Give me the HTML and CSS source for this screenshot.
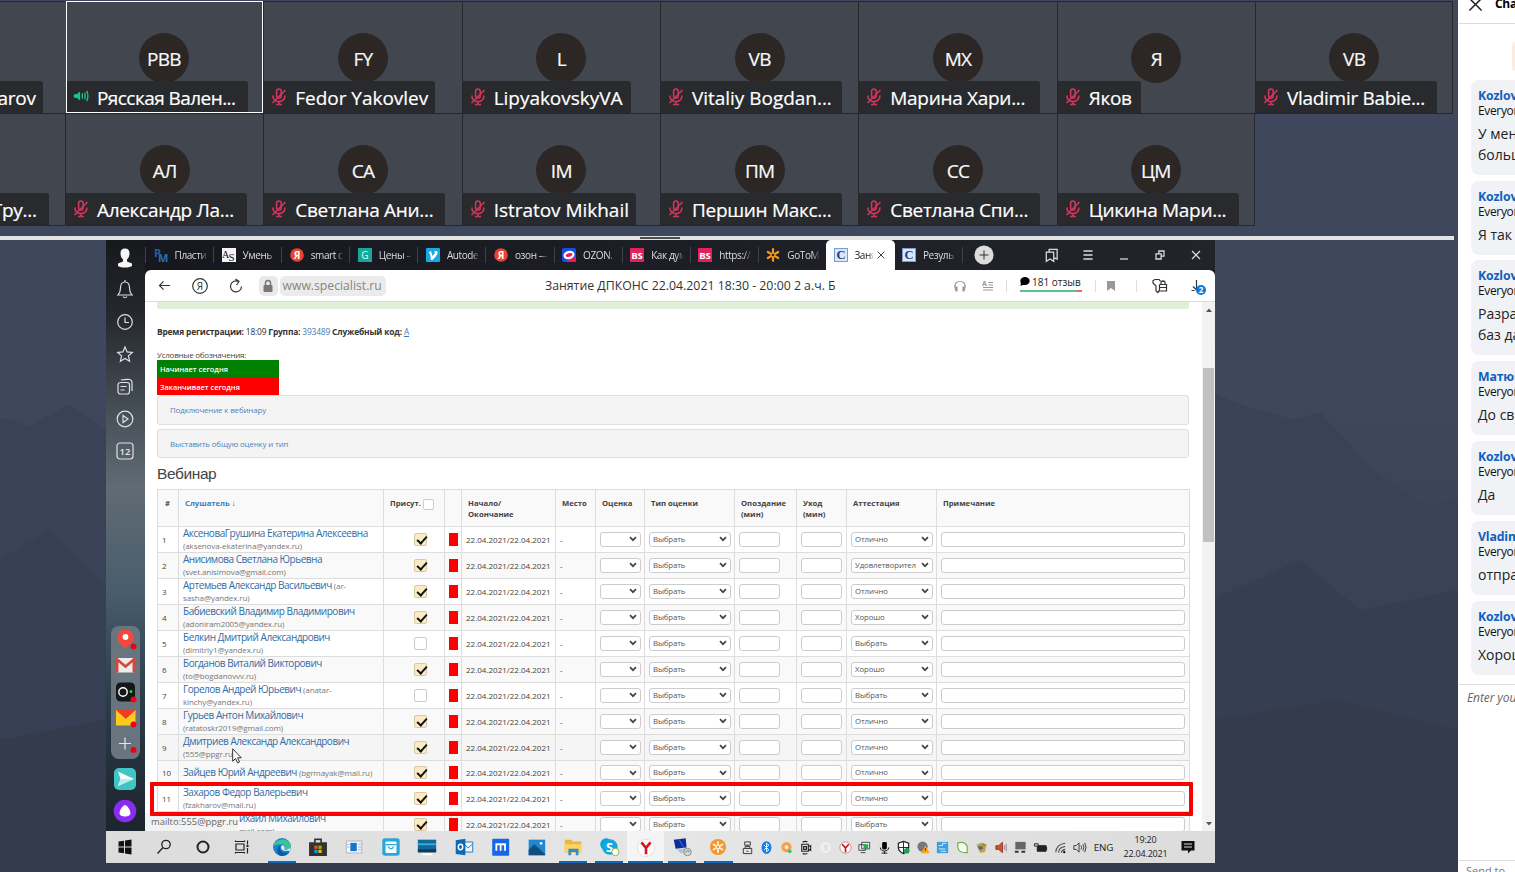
FILE: index.html
```html
<!DOCTYPE html>
<html lang="ru">
<head>
<meta charset="utf-8">
<title>Webinar</title>
<link rel="stylesheet" href="styles.css">
</head>
<body>
<svg class="defs" width="0" height="0">
  <symbol id="mic" viewBox="0 0 16 18"><g fill="none" stroke="#d2345c" stroke-width="1.6"><rect x="5.6" y="1" width="4.6" height="9" rx="2.3"/><path d="M2 7.500v1.200a5.800 4.800 0 0 0 11.800 0V7.500M8 13.500v3.500M5 16.500h6M1.500 15L14.500 2"/></g></symbol>
  <symbol id="chev" viewBox="0 0 8 6"><path d="M1 1.200l3 3 3-3" fill="none" stroke="#444" stroke-width="1.700"/></symbol>
  <symbol id="bs" viewBox="0 0 14 14"><rect width="14" height="14" fill="#e0215c"/><text x="7" y="10.500" text-anchor="middle" font-size="9.500" font-weight="700" fill="#fff">BS</text></symbol>
  <symbol id="ya" viewBox="0 0 14 14"><circle cx="7" cy="7" r="6.800" fill="#ee4130"/><text x="7" y="10.600" text-anchor="middle" font-size="10" font-weight="700" fill="#fff">Я</text></symbol>
  <symbol id="cc" viewBox="0 0 14 14"><rect x=".5" y=".5" width="13" height="13" fill="#dce6f6" stroke="#7d9cd0"/><text x="7" y="11" text-anchor="middle" font-size="12.500" font-weight="700" class="serif" fill="#1c3a80">C</text></symbol>
</svg>
<div class="app">
  <main class="stage">
    <svg class="wall" viewBox="0 0 1458 872" preserveAspectRatio="none"><path d="M0 418l30 8 40-22 40 30V872H0z" fill="#3a4258"/><path d="M0 560l50-30 60 60V872H0z" fill="#363f53"/><path d="M1210 392l40 16 45 12 25-8 55 60 50 34 33-8V872H1210z" fill="#3a4257"/><path d="M1210 600l90-40 60 50 98-20V872H1210z" fill="#363f52"/><path d="M0 740l106-20h1109l120-20 123 30V872H0z" fill="#333b4c"/></svg>
    <section class="gallery">
      <div class="tile"><div class="tag end t1"><b>Fedor Zakharov</b></div></div>
      <div class="tile talk"><i class="ava">РВВ</i><div class="tag wide"><svg viewBox="0 0 18 14"><path d="M1 5h3l4-3v10L4 9H1z" fill="#19c584"/><path d="M10.500 4v6M13.500 3v8M15.500 1q2.500 6 0 12" fill="none" stroke="#19c584" stroke-width="1.500"/></svg><b class="narrow">Рясская Вален...</b></div></div>
      <div class="tile"><i class="ava">FY</i><div class="tag w-fy"><svg><use href="#mic"/></svg><b class="lat">Fedor Yakovlev</b></div></div>
      <div class="tile"><i class="ava">L</i><div class="tag w-l"><svg><use href="#mic"/></svg><b class="lat">LipyakovskyVA</b></div></div>
      <div class="tile"><i class="ava">VB</i><div class="tag wide"><svg><use href="#mic"/></svg><b class="lat">Vitaliy Bogdan...</b></div></div>
      <div class="tile"><i class="ava">МХ</i><div class="tag wide"><svg><use href="#mic"/></svg><b>Марина Хари...</b></div></div>
      <div class="tile"><i class="ava">Я</i><div class="tag w-ya"><svg><use href="#mic"/></svg><b>Яков</b></div></div>
      <div class="tile last"><i class="ava">VB</i><div class="tag wide"><svg><use href="#mic"/></svg><b>Vladimir Babie...</b></div></div>
      <div class="tile"><div class="tag end t2"><b>Ирина Гру...</b></div></div>
      <div class="tile"><i class="ava">АЛ</i><div class="tag wide"><svg><use href="#mic"/></svg><b>Александр Ла...</b></div></div>
      <div class="tile"><i class="ava">СА</i><div class="tag wide"><svg><use href="#mic"/></svg><b>Светлана Ани...</b></div></div>
      <div class="tile"><i class="ava">IM</i><div class="tag w-im"><svg><use href="#mic"/></svg><b class="lat">Istratov Mikhail</b></div></div>
      <div class="tile"><i class="ava">ПМ</i><div class="tag wide"><svg><use href="#mic"/></svg><b>Першин Макс...</b></div></div>
      <div class="tile"><i class="ava">СС</i><div class="tag wide"><svg><use href="#mic"/></svg><b>Светлана Спи...</b></div></div>
      <div class="tile last"><i class="ava">ЦМ</i><div class="tag wide"><svg><use href="#mic"/></svg><b>Цикина Мари...</b></div></div>
    </section>
    <div class="divider"><span></span></div>

    <section class="desktop">
      <div class="browser">
        <aside class="side">
          <svg viewBox="0 0 24 24"><path d="M12 3.500c3.200 0 4.600 2 4.500 5s-1.300 5-2.500 6v2l5 2v2.500c-4 2-10 2-14 0V18.500l5-2v-2C8.800 13.500 7.600 11.500 7.500 8.500s1.300-5 4.500-5z" fill="#f5f5f5"/></svg>
          <svg viewBox="0 0 24 24"><path d="M5 18c2-2 2.500-4 2.500-7 0-4 2-6 4.500-6s4.500 2 4.500 6c0 3 .5 5 2.500 7zM10 19.500q2 2.500 4 0M12 3v2"/></svg>
          <svg viewBox="0 0 24 24"><circle cx="12" cy="12" r="7.300"/><path d="M12 7.500v5h4"/></svg>
          <svg viewBox="0 0 24 24"><path d="M12 5l2.100 4.900 5.200.5-3.900 3.500 1.200 5.300-4.600-2.700-4.600 2.700 1.200-5.300-3.900-3.500 5.200-.5z"/></svg>
          <svg viewBox="0 0 24 24"><rect x="5" y="7.500" width="11.500" height="11.500" rx="2.500"/><path d="M8 5q5.500-1 8.500-.5 2.500.5 2.500 3V16M7.500 11.500h6M7.500 15h4"/></svg>
          <svg viewBox="0 0 24 24"><circle cx="12" cy="12" r="7.800"/><path d="M10 8.500v7l5-3.500z"/></svg>
          <svg viewBox="0 0 24 24"><rect x="4" y="4" width="16" height="16" rx="3"/><text x="12" y="15.500" text-anchor="middle" font-size="9.500" font-weight="600" fill="#e5e9ec" stroke="none">12</text></svg>
          <div class="pins">
            <svg viewBox="0 0 26 24"><path d="M12.500 2.500a8 8 0 0 1 8 8c0 4.500-4 8-8 11-4-3-8-6.500-8-11a8 8 0 0 1 8-8z" fill="#f4483c"/><circle cx="12.500" cy="10" r="2.900" fill="#fff"/><circle cx="20.500" cy="19.500" r="3" fill="#f00010"/></svg>
            <svg viewBox="0 0 26 24"><rect x="3" y="5" width="19" height="14.500" rx="1" fill="#ececec"/><path d="M4.200 19.500V6.500l8.300 7 8.300-7v13" fill="none" stroke="#d44738" stroke-width="2.500"/></svg>
            <svg viewBox="0 0 26 24"><rect x="3" y="2.500" width="19" height="19" rx="4.500" fill="#14181b"/><circle cx="10" cy="12" r="4.200" fill="none" stroke="#fff" stroke-width="1.400"/><circle cx="18" cy="11.500" r="1.500" fill="#28cf46"/><circle cx="20.500" cy="19.500" r="3" fill="#f00010"/></svg>
            <svg viewBox="0 0 26 24"><rect x="3" y="4" width="19.500" height="15.500" fill="#fecb1c"/><path d="M3 4h19.500l-9.700 9z" fill="#f23a2a"/><circle cx="20.500" cy="18.500" r="3" fill="#f00010"/></svg>
            <svg viewBox="0 0 26 24"><path d="M12 5.500v12M6 11.500h12" stroke="#e4e8ea" stroke-width="1.200"/><circle cx="20.500" cy="18" r="3" fill="#f00010"/></svg>
          </div>
          <svg class="big" viewBox="0 0 26 26"><rect x="2" y="2" width="22" height="22" rx="5" fill="#41c5c2"/><path d="M6 5.500L22 13 6 20l2.500-7z" fill="#f5ffff"/><path d="M8.500 13H22L6 20z" fill="#b7eeee"/></svg>
          <svg class="big" viewBox="0 0 26 26"><circle cx="13" cy="13" r="11.300" fill="#8a2cf0"/><path d="M13 7c2 0 5.500 5.500 5.500 8S15.500 18.500 13 18.500 7.500 17.500 7.500 15 11 7 13 7z" fill="#fff"/></svg>
        </aside>
        <div class="main">
          <header class="tabs">
            <div class="tab"><svg viewBox="0 0 14 14"><text x="0" y="9" font-size="11" font-weight="700" fill="#1f5fa5">P</text><text x="4" y="14" font-size="11" font-weight="700" fill="#2a6db4">M</text></svg><span>Пласти</span></div>
            <div class="tab"><svg viewBox="0 0 14 14"><rect width="14" height="14" fill="#f4f4f4"/><text x="0" y="10" font-size="10" class="serif" fill="#111">A</text><text x="6.500" y="12.500" font-size="11" class="serif" fill="#111">S</text></svg><span>Умень</span></div>
            <div class="tab"><svg><use href="#ya"/></svg><span>smart с</span></div>
            <div class="tab"><svg viewBox="0 0 14 14"><rect width="14" height="14" fill="#18a89b"/><text x="7" y="10.500" text-anchor="middle" font-size="10" fill="#d8fff8">G</text></svg><span>Цены –</span></div>
            <div class="tab"><svg viewBox="0 0 14 14"><rect width="14" height="14" rx="1" fill="#1aa7e4"/><path d="M2.500 4.500L5 3l1.500 5L9 5 8 3.500q4-1.500 3.500 1.500T6.500 12H5L4 6z" fill="#fff"/></svg><span>Autode</span></div>
            <div class="tab"><svg><use href="#ya"/></svg><span>озон —</span></div>
            <div class="tab"><svg viewBox="0 0 14 14"><rect width="14" height="14" rx="2" fill="#1450e0"/><path d="M14 8v6H3z" fill="#f0185c"/><ellipse cx="7" cy="7" rx="4.500" ry="3" fill="#f0185c" stroke="#fff" stroke-width="2.200" transform="rotate(-15 7 7)"/></svg><span>OZON.</span></div>
            <div class="tab"><svg><use href="#bs"/></svg><span>Как дум</span></div>
            <div class="tab"><svg><use href="#bs"/></svg><span>https://</span></div>
            <div class="tab"><svg viewBox="0 0 14 14"><g stroke="#f7981d" stroke-width="2.200" stroke-linecap="round"><path d="M7 1.200v11.600M1.800 4l10.400 6M1.800 10l10.400-6"/></g><circle cx="7" cy="7" r="1.300" fill="#222"/></svg><span>GoToM</span></div>
            <div class="tab active"><svg><use href="#cc"/></svg><span>Заня</span><em><svg viewBox="0 0 8 8"><path d="M.7.700l6.600 6.600M7.300.700L.7 7.300" stroke="#444"/></svg></em></div>
            <div class="tab after"><svg><use href="#cc"/></svg><span>Резуль</span></div>
            <div class="plus"><svg viewBox="0 0 20 20"><circle cx="10" cy="10" r="9.600" fill="#dcdcdc"/><path d="M10 5.500v9M5.500 10h9" stroke="#333"/></svg></div>
            <div class="winbtns">
              <svg viewBox="0 0 14 14"><path d="M2 4.500h6.500V12.500L5.300 10.500 2 12.500zM4.500 4V2h7v8.500L9 9.500"/></svg>
              <svg viewBox="0 0 14 14"><path d="M3 3.500h8M3 7h8M3 10.500h8"/></svg>
              <svg viewBox="0 0 14 14"><path d="M3.500 10.500h7"/></svg>
              <svg viewBox="0 0 14 14"><path d="M3.500 6h4.500v4.500H3.500zM6 5.500V3.500h4.500V8H8.500"/></svg>
              <svg viewBox="0 0 14 14"><path d="M3.500 3.500l7 7M10.500 3.500l-7 7"/></svg>
            </div>
          </header>
          <nav class="bar">
            <svg class="back" viewBox="0 0 14 14"><path d="M13 7H1.500M6 2.500L1.500 7 6 11.500"/></svg>
            <svg class="yab" viewBox="0 0 18 18"><circle cx="9" cy="9" r="7.300"/><text x="9" y="12.700" text-anchor="middle" font-size="10" stroke="none" fill="#333">Я</text></svg>
            <svg class="rel" viewBox="0 0 16 16"><path d="M13.500 8.500a5.500 5.500 0 1 1-3-5M7.500 1L11 3.500 8.500 7"/></svg>
            <span class="lock"><svg viewBox="0 0 12 14"><rect x="1.500" y="6" width="9" height="7" rx="1" fill="#777"/><path d="M3.500 6V4a2.500 2.500 0 0 1 5 0v2" fill="none" stroke="#777" stroke-width="1.500"/></svg></span>
            <span class="url">www.specialist.ru</span>
            <span class="title">Занятие ДПКОНС 22.04.2021 18:30 - 20:00 2 а.ч. Б</span>
            <svg class="hp" viewBox="0 0 14 14"><path d="M2 8.500C1.500 4.500 3.500 2.500 7 2.500s5.500 2 5 6" stroke="#999"/><path d="M1.200 7.500H4.500v5H2.500zM12.800 7.500H9.500v5h2z" fill="#999" stroke="none"/></svg>
            <svg class="rd" viewBox="0 0 12 12"><path d="M6.500 2.500H11M6.500 5H11M1 7.500h10M1 10h10" stroke="#999"/><text x="0" y="6" font-size="7" font-weight="700" stroke="none" fill="#999">A</text></svg>
            <i class="sep"></i>
            <span class="rev"><svg viewBox="0 0 10 9"><ellipse cx="5" cy="4" rx="4.700" ry="4"/><path d="M1 4l-.5 5L5 7z"/></svg>181 отзыв</span>
            <i class="sep"></i>
            <svg class="bm" viewBox="0 0 10 12"><path d="M1 1h8v10L5 8l-4 3z" fill="#999" stroke="none"/></svg>
            <i class="sep"></i>
            <svg class="key" viewBox="0 0 16 16"><path d="M7.500 6.500V12L6 14.500 4 13V8L1 5V2.500l2-1h4l1.500 1.500M7.500 6.500h7V13h-7M7.500 9.500h7M9 6V4q2-2 4 0v2"/></svg>
            <span class="dl"><svg viewBox="0 0 14 14"><path d="M6.500 1v10M3 7.500l3.500 3.500L9 8.500M1.500 11.500h3"/></svg><b>2</b></span>
          </nav>
          <div class="view">
            <article class="page">
              <div class="okbar"></div>
              <p class="info"><b>Время регистрации:</b> 18:09 <b>Группа:</b> <a>393489</a> <b>Служебный код:</b> <a class="u">А</a></p>
              <p class="legend">Условные обозначения:</p>
              <div class="lg green">Начинает сегодня</div>
              <div class="lg red">Заканчивает сегодня</div>
              <div class="panel p1">Подключение к вебинару</div>
              <div class="panel p2">Выставить общую оценку и тип</div>
              <h2>Вебинар</h2>
              <table>
                <colgroup><col class="c1"><col class="c2"><col class="c3"><col class="c4"><col class="c5"><col class="c6"><col class="c7"><col class="c8"><col class="c9"><col class="c10"><col class="c11"><col class="c12"></colgroup>
                <tr class="head"><th>#</th><th><a>Слушатель</a> ↓</th><th class="pr">Присут. <i class="cb"></i></th><th></th><th>Начало/<br>Окончание</th><th>Место</th><th>Оценка</th><th>Тип оценки</th><th>Опоздание<br>(мин)</th><th>Уход<br>(мин)</th><th>Аттестация</th><th>Примечание</th></tr>
                <tr><td>1</td><td class="n"><a>АксеноваГрушина Екатерина Алексеевна</a><br>(aksenova-ekaterina@yandex.ru)</td><td class="k"><i class="cb on"></i></td><td class="r"><i></i></td><td>22.04.2021/22.04.2021</td><td>-</td><td><span class="f s"><svg><use href="#chev"/></svg></span></td><td><span class="f m">Выбрать<svg><use href="#chev"/></svg></span></td><td><span class="f s"></span></td><td><span class="f s"></span></td><td><span class="f m">Отлично<svg><use href="#chev"/></svg></span></td><td><span class="f l"></span></td></tr>
                <tr><td>2</td><td class="n"><a>Анисимова Светлана Юрьевна</a><br>(svet.anisimova@gmail.com)</td><td class="k"><i class="cb on"></i></td><td class="r"><i></i></td><td>22.04.2021/22.04.2021</td><td>-</td><td><span class="f s"><svg><use href="#chev"/></svg></span></td><td><span class="f m">Выбрать<svg><use href="#chev"/></svg></span></td><td><span class="f s"></span></td><td><span class="f s"></span></td><td><span class="f m">Удовлетворител<svg><use href="#chev"/></svg></span></td><td><span class="f l"></span></td></tr>
                <tr><td>3</td><td class="n"><a>Артемьев Александр Васильевич</a> (ar-<br>sasha@yandex.ru)</td><td class="k"><i class="cb on"></i></td><td class="r"><i></i></td><td>22.04.2021/22.04.2021</td><td>-</td><td><span class="f s"><svg><use href="#chev"/></svg></span></td><td><span class="f m">Выбрать<svg><use href="#chev"/></svg></span></td><td><span class="f s"></span></td><td><span class="f s"></span></td><td><span class="f m">Отлично<svg><use href="#chev"/></svg></span></td><td><span class="f l"></span></td></tr>
                <tr><td>4</td><td class="n"><a>Бабиевский Владимир Владимирович</a><br>(adoniram2005@yandex.ru)</td><td class="k"><i class="cb on"></i></td><td class="r"><i></i></td><td>22.04.2021/22.04.2021</td><td>-</td><td><span class="f s"><svg><use href="#chev"/></svg></span></td><td><span class="f m">Выбрать<svg><use href="#chev"/></svg></span></td><td><span class="f s"></span></td><td><span class="f s"></span></td><td><span class="f m">Хорошо<svg><use href="#chev"/></svg></span></td><td><span class="f l"></span></td></tr>
                <tr><td>5</td><td class="n"><a>Белкин Дмитрий Александрович</a><br>(dimitriy1@yandex.ru)</td><td class="k"><i class="cb"></i></td><td class="r"><i></i></td><td>22.04.2021/22.04.2021</td><td>-</td><td><span class="f s"><svg><use href="#chev"/></svg></span></td><td><span class="f m">Выбрать<svg><use href="#chev"/></svg></span></td><td><span class="f s"></span></td><td><span class="f s"></span></td><td><span class="f m">Выбрать<svg><use href="#chev"/></svg></span></td><td><span class="f l"></span></td></tr>
                <tr><td>6</td><td class="n"><a>Богданов Виталий Викторович</a><br>(to@bogdanovvv.ru)</td><td class="k"><i class="cb on"></i></td><td class="r"><i></i></td><td>22.04.2021/22.04.2021</td><td>-</td><td><span class="f s"><svg><use href="#chev"/></svg></span></td><td><span class="f m">Выбрать<svg><use href="#chev"/></svg></span></td><td><span class="f s"></span></td><td><span class="f s"></span></td><td><span class="f m">Хорошо<svg><use href="#chev"/></svg></span></td><td><span class="f l"></span></td></tr>
                <tr><td>7</td><td class="n"><a>Горелов Андрей Юрьевич</a> (anatar-<br>kinchy@yandex.ru)</td><td class="k"><i class="cb"></i></td><td class="r"><i></i></td><td>22.04.2021/22.04.2021</td><td>-</td><td><span class="f s"><svg><use href="#chev"/></svg></span></td><td><span class="f m">Выбрать<svg><use href="#chev"/></svg></span></td><td><span class="f s"></span></td><td><span class="f s"></span></td><td><span class="f m">Выбрать<svg><use href="#chev"/></svg></span></td><td><span class="f l"></span></td></tr>
                <tr><td>8</td><td class="n"><a>Гурьев Антон Михайлович</a><br>(ratatoskr2019@gmail.com)</td><td class="k"><i class="cb on"></i></td><td class="r"><i></i></td><td>22.04.2021/22.04.2021</td><td>-</td><td><span class="f s"><svg><use href="#chev"/></svg></span></td><td><span class="f m">Выбрать<svg><use href="#chev"/></svg></span></td><td><span class="f s"></span></td><td><span class="f s"></span></td><td><span class="f m">Отлично<svg><use href="#chev"/></svg></span></td><td><span class="f l"></span></td></tr>
                <tr class="hover"><td>9</td><td class="n"><a>Дмитриев Александр Александрович</a><br>(555@ppgr.ru)</td><td class="k"><i class="cb on"></i></td><td class="r"><i></i></td><td>22.04.2021/22.04.2021</td><td>-</td><td><span class="f s"><svg><use href="#chev"/></svg></span></td><td><span class="f m">Выбрать<svg><use href="#chev"/></svg></span></td><td><span class="f s"></span></td><td><span class="f s"></span></td><td><span class="f m">Отлично<svg><use href="#chev"/></svg></span></td><td><span class="f l"></span></td></tr>
                <tr class="short"><td>10</td><td class="n"><a>Зайцев Юрий Андреевич</a> (bgrmayak@mail.ru)</td><td class="k"><i class="cb on"></i></td><td class="r"><i></i></td><td>22.04.2021/22.04.2021</td><td>-</td><td><span class="f s"><svg><use href="#chev"/></svg></span></td><td><span class="f m">Выбрать<svg><use href="#chev"/></svg></span></td><td><span class="f s"></span></td><td><span class="f s"></span></td><td><span class="f m">Отлично<svg><use href="#chev"/></svg></span></td><td><span class="f l"></span></td></tr>
                <tr><td>11</td><td class="n"><a>Захаров Федор Валерьевич</a><br>(fzakharov@mail.ru)</td><td class="k"><i class="cb on"></i></td><td class="r"><i></i></td><td>22.04.2021/22.04.2021</td><td>-</td><td><span class="f s"><svg><use href="#chev"/></svg></span></td><td><span class="f m">Выбрать<svg><use href="#chev"/></svg></span></td><td><span class="f s"></span></td><td><span class="f s"></span></td><td><span class="f m">Отлично<svg><use href="#chev"/></svg></span></td><td><span class="f l"></span></td></tr>
                <tr><td></td><td class="n tail"><a>ихаил Михайлович</a><br>mail.com)</td><td class="k"><i class="cb on"></i></td><td class="r"><i></i></td><td>22.04.2021/22.04.2021</td><td>-</td><td><span class="f s"><svg><use href="#chev"/></svg></span></td><td><span class="f m">Выбрать<svg><use href="#chev"/></svg></span></td><td><span class="f s"></span></td><td><span class="f s"></span></td><td><span class="f m">Выбрать<svg><use href="#chev"/></svg></span></td><td><span class="f l"></span></td></tr>
              </table>
            </article>
            <div class="scroll"><svg viewBox="0 0 8 6"><path d="M1 5l3-3.500L7 5z" fill="#555"/></svg><span></span><svg viewBox="0 0 8 6"><path d="M1 1l3 3.500L7 1z" fill="#555"/></svg></div>
            <div class="status">mailto:555@ppgr.ru</div>
            <div class="mark"></div>
            <svg class="cursor" viewBox="0 0 10 16"><path d="M.7.800v12.400l2.900-2.700 1.900 4.400 2-.9-1.900-4.200h3.700z" fill="#fff" stroke="#333"/></svg>
          </div>
        </div>
      </div>

      <footer class="task">
        <div class="sys">
          <svg viewBox="0 0 24 24"><path d="M5.500 6.500l5.500-.8v5.800H5.500zM12 5.500l6.500-1v7H12zM5.500 12.500H11v5.800l-5.500-.8zM12 12.500h6.500v7l-6.500-1z" fill="#111"/></svg>
          <svg viewBox="0 0 24 24"><g fill="none" stroke="#222" stroke-width="1.300"><circle cx="14" cy="9.500" r="4.200"/><path d="M11 12.500L5.500 18.500"/></g></svg>
          <svg viewBox="0 0 24 24"><circle cx="12" cy="12" r="5.500" fill="none" stroke="#222" stroke-width="2"/></svg>
          <svg viewBox="0 0 24 24"><g fill="none" stroke="#222" stroke-width="1.200"><path d="M6 9h8v6H6zM5.500 5.500v1h9v-1M5.500 18.500v-1h9v1M17.500 5.500v4M17.500 13v5.500"/><path d="M16.500 11h2" stroke-width="2"/></g></svg>
        </div>
        <div class="apps">
          <span class="run"><svg viewBox="0 0 24 24"><circle cx="12" cy="12" r="9.800" fill="#1683d1"/><path d="M2.300 11C4 3 19 0 21.800 11c.5 4-3.500 5-7 4 2-3 0-6-3.500-6-4 0-7 1-9 2z" fill="#3cc39a"/><path d="M11.500 9.500c-3 2-2 7 2 8.500 3 1 5 0 7-1.500-2 4-6 5.500-9.500 5.200C5 21 5.500 11 11.500 9.500z" fill="#0c59a4"/><path d="M12 10c-2 1.500-1 5 2 6h7v-3.500c-2 2.500-5 3-6.500 2.500 1-2 .5-5-2.500-5z" fill="#e3eef3"/></svg></span>
          <span><svg viewBox="0 0 24 24"><path d="M3 7.500h18V21H3zM8.500 7V3.500h7V7" fill="#333" stroke="#333" stroke-width="1.500"/><path d="M9.500 4.500h5V7h-5z" fill="#ddd"/><path d="M8 10.500h3.500V14H8z" fill="#f25022"/><path d="M12.500 10.500H16V14h-3.500z" fill="#7fba00"/><path d="M8 15h3.500v3.500H8z" fill="#00a4ef"/><path d="M12.500 15H16v3.500h-3.500z" fill="#ffb900"/></svg></span>
          <span><svg viewBox="0 0 24 24"><rect x="3.500" y="5.500" width="17" height="13" fill="#f5f8fa" stroke="#a9b4bb"/><path d="M8 7.500h7v9H8z" fill="#1573d2"/><path d="M4.500 9h2.500M4.500 12h2.500M16.500 9h3M16.500 12h3M16.500 15h3" stroke="#9ab"/></svg></span>
          <span><svg viewBox="0 0 24 24"><rect x="2.500" y="2.500" width="19" height="19" rx="3" fill="#2ca6da"/><rect x="6" y="6" width="12" height="12.500" rx="1" fill="#f4fbff"/><path d="M6 9.500h12M9 11.500q3 5 6 0" fill="none" stroke="#2ca6da" stroke-width="1.400"/></svg></span>
          <span><svg viewBox="0 0 24 24"><path d="M2 4h20v12H2z" fill="#10699f"/><path d="M2 8h20v2H2z" fill="#3ab0d7"/><path d="M2 14.500h20V18H2z" fill="#123a58"/><path d="M7 19h10v2H7z" fill="#fff"/></svg></span>
          <span><svg viewBox="0 0 24 24"><path d="M11 6.500h10.500v11H11z" fill="#eef6fb" stroke="#1479c5"/><path d="M12 9l4.500 4L21 9" fill="none" stroke="#1479c5"/><path d="M3 4.500L13.500 3v18L3 19.500z" fill="#0c69b6"/><ellipse cx="8.200" cy="12" rx="2.400" ry="3" fill="none" stroke="#fff" stroke-width="1.600"/></svg></span>
          <span><svg viewBox="0 0 24 24"><rect x="3.500" y="3" width="18.500" height="18.500" rx="1" fill="#1768e8"/><path d="M8 16V9h9.500v7M12.700 9v7" fill="none" stroke="#fff" stroke-width="2"/></svg></span>
          <span><svg viewBox="0 0 24 24"><path d="M4 4h18v17H4z" fill="#2086d0"/><path d="M4 15l6-6 12 11v1H4z" fill="#124c80"/><circle cx="17.500" cy="8" r="1.500" fill="#fff"/></svg></span>
          <span class="run"><svg viewBox="0 0 24 24"><path d="M3 4h7l2 2h9v12H3z" fill="#efb739"/><path d="M3 9h18v9H3z" fill="#fbd366"/><path d="M7 21v-7h11v7h-3v-3.500h-5V21z" fill="#2d8fc6"/></svg></span>
          <span class="run"><svg viewBox="0 0 24 24"><circle cx="9" cy="9" r="6.500" fill="#0a9edb"/><circle cx="13" cy="12" r="8.500" fill="#14a7df"/><text x="12.500" y="17" text-anchor="middle" font-size="14" font-weight="700" fill="#fff">S</text><circle cx="19" cy="17.500" r="4" fill="#fdfdf4" stroke="#8aae54"/></svg></span>
          <span class="run hot"><svg viewBox="0 0 24 24"><circle cx="12" cy="13" r="9.500" fill="#fbfbfb" stroke="#ddd"/><path d="M7 7l5 6 5-6M12 13v7" fill="none" stroke="#d6141c" stroke-width="2.800"/></svg></span>
          <span class="run"><svg viewBox="0 0 24 24"><path d="M3 4l13-1.500 1 10L5 14z" fill="#0b2f9b"/><path d="M6 15l10-2 3 4-8 2z" fill="#b7c2cc"/><path d="M9 4l5 9" stroke="#4d79e6"/><circle cx="18" cy="17.500" r="4" fill="#d3d8d4" stroke="#888"/><path d="M16 18l2-2 2 1" fill="none" stroke="#383"/></svg></span>
          <span class="run"><svg viewBox="0 0 24 24"><circle cx="12" cy="12" r="8.800" fill="#f5962f"/><path d="M12 6.500v11M7.200 9.200l9.600 5.600M7.200 14.800l9.600-5.600" stroke="#fff5e0" stroke-width="2" stroke-linecap="round"/><circle cx="12" cy="12" r="1.300" fill="#f5962f"/></svg></span>
        </div>
        <div class="tray">
          <svg viewBox="0 0 16 16"><path d="M3.500 9h9v5.500h-9zM5.500 9V7h5v2M5 2h6v3.500H5zM7 12h2M8 5.500V7" fill="none" stroke="#333"/></svg>
          <svg viewBox="0 0 16 16"><ellipse cx="8" cy="8" rx="5.300" ry="6.800" fill="#1580e0"/><path d="M5.500 5.500l5 5L8 12.500v-9l2.500 2-5 5" fill="none" stroke="#fff"/></svg>
          <svg viewBox="0 0 16 16"><circle cx="8" cy="7.500" r="5.500" fill="#f5a04a"/><circle cx="8" cy="7.500" r="2" fill="#fff2dd"/><circle cx="11.500" cy="12" r="2" fill="#3bc07d"/></svg>
          <svg viewBox="0 0 16 16"><path d="M4 4.500h7v7.500H4zM5 2q3-1 5 0M5 14.500q3 .8 5 0M11 7l2.500-1v5L11 10M6 7h3v3H6z" fill="none" stroke="#222" stroke-width="1.200"/></svg>
          <svg viewBox="0 0 16 16"><circle cx="8" cy="8" r="6" fill="#eee"/><text x="8" y="11" text-anchor="middle" font-size="8" fill="#ccc">S</text></svg>
          <svg viewBox="0 0 16 16"><circle cx="8" cy="8" r="6" fill="#fff" stroke="#c88"/><path d="M4.500 4.500L8 8.500l3.500-4M8 8.500V13" fill="none" stroke="#cc1520" stroke-width="1.800"/></svg>
          <svg viewBox="0 0 16 16"><path d="M5 2.500h8.500v7H5zM2 5h7v6H2zM4 13.500h5" fill="#f4f4f4" stroke="#444"/><path d="M7 4.500h5V9H7z" fill="#28b04a"/></svg>
          <svg viewBox="0 0 16 16"><rect x="5.500" y="2" width="5" height="8" rx="1.500"/><path d="M3.500 8c0 5 9 5 9 0M8 12v2.500M5 14h6" fill="none" stroke="#111"/></svg>
          <svg viewBox="0 0 16 16"><path d="M8 1.500l5.500 2V8c0 3-2 5-5.500 6.500C4.500 13 2.500 11 2.500 8V3.500z" fill="#fff" stroke="#222" stroke-width="1.300"/><path d="M8 2v12M3 8h10" stroke="#222"/><circle cx="11.500" cy="11.500" r="3" fill="#18a058"/></svg>
          <svg viewBox="0 0 16 16"><circle cx="7" cy="7" r="5.500" fill="#777"/><path d="M10 5.500l4.500 8.500h-9z" fill="#f6a61c"/><path d="M10 8.500v3" stroke="#333"/></svg>
          <svg viewBox="0 0 16 16"><path d="M2 2h12v12H2z" fill="#3c9fe0"/><path d="M4 6h4V3.500h4M4 9.500h7M6 12h6" fill="none" stroke="#d8f0ff"/></svg>
          <svg viewBox="0 0 16 16"><path d="M3 3q8-2 10 4v6.500Q4 14 3 8z" fill="#f6fff0" stroke="#78ac4a" stroke-width="1.300"/></svg>
          <svg viewBox="0 0 16 16"><path d="M2.500 5l5-2 6 2-2 8-5 .5z" fill="#d89a3c"/><path d="M4 7l4-1 2 3-4 2z" fill="#2d76b0"/><path d="M9 3l4 2-3 2z" fill="#59a03a"/></svg>
          <svg viewBox="0 0 16 16"><path d="M2 6h3l4-3.500v11L5 10H2z" fill="#d2521f" stroke="#933"/><path d="M11 5.500v5M13 4v8" stroke="#888"/></svg>
          <svg viewBox="0 0 16 16"><path d="M2.500 2h11v8h-11z" fill="#666"/><path d="M2 12.500h4M9 12.500h4" stroke="#333" stroke-width="2"/></svg>
          <svg viewBox="0 0 16 16"><path d="M4.500 6H14v6H4.500zM14.500 7.500v3" fill="#222" stroke="#222"/><path d="M1.500 4h4v2.500h-4z" fill="#ddd" stroke="#222"/></svg>
          <svg viewBox="0 0 16 16"><path d="M3 13C3 8 7 4 13 3.500M6 13.500c0-3.500 3-6 7-6.500M9 13.500c0-2 2-3 4-3.500" fill="none" stroke="#444" stroke-width="1.100"/><circle cx="12" cy="13" r="1.200"/></svg>
          <svg viewBox="0 0 16 16"><path d="M2 6h2.500L7.500 3v10L4.500 10H2zM9.500 6q1.500 2 0 4M11.500 4.500q2.500 3.500 0 7M13.500 3q3 5 0 10" fill="none" stroke="#333"/></svg>
        </div>
        <span class="lang">ENG</span>
        <span class="clock">19:20<br>22.04.2021</span>
        <svg class="note" viewBox="0 0 16 16"><path d="M1.500 2h13v9.500H11L8 14.500v-3H1.500z" fill="#111"/><path d="M4 5h8M4 8h8" stroke="#ddd"/></svg>
      </footer>
    </section>
  </main>

  <aside class="chat">
    <header><svg viewBox="0 0 16 16"><path d="M1.500 1.500l13 13M14.500 1.500l-13 13" stroke="#222" stroke-width="1.600"/></svg><b>Chat</b></header>
    <div class="notice"></div>
    <div class="msgs">
      <div class="msg two"><b>Kozlov</b><small>Everyone</small><p>У меня<br>больше</p></div>
      <div class="msg"><b>Kozlov</b><small>Everyone</small><p>Я так и</p></div>
      <div class="msg two"><b>Kozlov</b><small>Everyone</small><p>Разраб<br>баз да</p></div>
      <div class="msg"><b>Матюш</b><small>Everyone</small><p>До сви</p></div>
      <div class="msg"><b>Kozlov</b><small>Everyone</small><p>Да</p></div>
      <div class="msg"><b>Vladimir</b><small>Everyone</small><p>отправ</p></div>
      <div class="msg"><b>Kozlov</b><small>Everyone</small><p>Хорош</p></div>
    </div>
    <div class="enter">Enter your</div>
    <div class="send">Send to</div>
  </aside>
</div>
</body>
</html>
```
FILE: styles.css
```css
* { box-sizing: border-box; }
body { margin: 0; width: 1515px; height: 872px; overflow: hidden; font-family: "Open Sans", "Noto Sans", sans-serif; }
p, h2 { margin: 0; }
i { font-style: normal; }
svg { display: block; flex: none; }
.defs { position: absolute; }
.serif { font-family: "Liberation Serif", serif; }
.app { display: flex; width: 1515px; height: 872px; overflow: hidden; }
.stage { position: relative; isolation: isolate; width: 1458px; height: 872px; flex: none; overflow: hidden; background: linear-gradient(#40485e 0, #3e475b 45%, #353d4e 100%); }
.wall { position: absolute; inset: 0; width: 100%; height: 100%; z-index: -1; }

/* participants */
.gallery { display: grid; grid-template-columns: repeat(8, 198.350px); grid-auto-rows: 112px; margin-left: -133.400px; padding-top: 1px; height: 236px; align-content: start; }
.tile { display: flex; flex-direction: column; align-items: center; background: #42464f; border: 1px solid #25272b; border-width: 1px 0 0 1px; height: 112px; box-shadow: 0 1px #25272b; }
.tile.last { border-right-width: 1px; }
.tile.talk { border: 1px solid #fff; margin-left: 1px; width: 197px; }
.tile.talk .ava { margin-left: -1px; }
.ava { width: 50px; height: 50px; border-radius: 50%; background: #2c2725; color: #f8f8f8; margin-top: 30.500px; flex: none; font-size: 19px; line-height: 53px; text-align: center; letter-spacing: -.7px; -webkit-text-stroke: .2px; }
.tag { display: flex; align-items: center; align-self: flex-start; height: 32px; margin-top: -1.500px; background: #282a2e; border-top-right-radius: 3px; color: #fff; padding: 2px 0 0 7px; position: relative; white-space: nowrap; }
.tag svg { width: 16px; height: 18px; margin-top: -3px; }
.tag b { font-weight: 400; font-size: 19px; line-height: 26px; margin-left: 8px; letter-spacing: -.3px; -webkit-text-stroke: .2px; }
.tag b.lat { letter-spacing: -.03px; }
.tag b.narrow { letter-spacing: -.550px; }
.talk .tag { padding-left: 6px; height: 31px; }
.wide { width: 181px; }
.w-fy { width: 171px; }
.w-l { width: 168px; }
.w-ya { width: 83px; }
.w-im { width: 173px; }
.tag.end { margin-top: 79px; justify-content: flex-end; padding-right: 7px; }
.t1 { width: 175px; }
.tag.end.t2 { width: 181px; padding-right: 12px; }
.divider { width: 1454px; height: 4px; background: #e3e4e4; display: flex; justify-content: center; align-items: center; padding-right: 134px; }
.divider span { width: 40px; height: 2px; background: #4c4f50; }

/* shared desktop */
.desktop { width: 1109px; height: 623px; margin-left: 106px; }
.browser { display: flex; height: 591px; background: #1a1c22; }
.side { width: 39px; display: flex; flex-direction: column; align-items: center; padding: 5px 1px 0 0; background: linear-gradient(#17181c 0, #24272d 12%, #4d565e 32%, #606b74 42%, #485c6c 60%, #2c3d4b 77%, #1c242d 100%); }
.side > svg { width: 24px; height: 24px; margin-bottom: 8.400px; fill: none; stroke: #dce1e5; stroke-width: 1.200; }
.side > svg:first-child { stroke: none; }
.pins { width: 29px; height: 133px; margin: 154px 0 7px; border-radius: 8px; background: #69757e; padding: 1px 1px; flex: none; display: flex; flex-direction: column; }
.pins svg { width: 26px; height: 24px; margin: 0 0 2.400px 1px; }
.side > svg.big { width: 26px; height: 26px; margin: 0 0 6.500px; stroke: none; }
.main { width: 1070px; display: flex; flex-direction: column; }
.tabs { height: 30px; display: flex; background: linear-gradient(100deg, #17181f, #22242c); }
.tab { width: 68.100px; display: flex; align-items: center; padding-left: 8.500px; position: relative; color: #ddd; flex: none; }
.tab::before { content: ""; position: absolute; left: 0; top: 7px; height: 16px; width: 1px; background: #3f4147; }
.tab svg { width: 14px; height: 14px; }
.tab span { margin-left: 7px; width: 33px; overflow: hidden; white-space: nowrap; font-size: 10px; line-height: 16px; letter-spacing: -.4px; -webkit-mask-image: linear-gradient(90deg, #000 75%, transparent); mask-image: linear-gradient(90deg, #000 75%, transparent); }
.tab.active { background: #fff; color: #222; width: 69px; border-radius: 5px 5px 0 0; }
.tab.active::before { display: none; }
.tab.active span { width: 20px; margin-left: 6px; }
.tab.active em { margin-left: 3px; }
.tab.active em svg { width: 8px; height: 8px; }
.tab.after { padding-left: 7px; }
.tab.after::before { left: auto; right: 0; }
.plus { width: 42px; display: flex; align-items: center; justify-content: center; }
.plus svg { width: 20px; height: 20px; }
.winbtns { display: flex; align-items: center; gap: 20px; margin-left: 39px; }
.winbtns svg { width: 16px; height: 16px; fill: none; stroke: #ddd; stroke-width: 1.100; }
.bar { height: 32px; background: #fff; border-radius: 6px 6px 0 0; display: flex; align-items: center; padding-left: 13px; border-bottom: 1px solid #ddd; }
.bar svg { fill: none; stroke: #333; stroke-width: 1.200; }
.back { width: 13px; height: 13px; }
.yab { width: 18px; height: 18px; margin-left: 20px; }
.rel { width: 16px; height: 16px; margin-left: 19px; }
.lock { width: 19px; height: 20px; margin-left: 14.500px; border-radius: 5px; background: #e9e9e9; display: flex; align-items: center; justify-content: center; }
.bar .lock svg { width: 12px; height: 14px; stroke: none; }
.url { width: 106px; height: 20px; margin-left: 2px; border-radius: 5px; background: #ebebeb; color: #858585; font-size: 12.200px; line-height: 20px; padding-left: 3px; white-space: nowrap; }
.title { width: 292px; margin-left: 159.500px; font-size: 12.300px; color: #333; white-space: nowrap; }
.hp { width: 14px; height: 14px; margin-left: 116px; }
.rd { width: 12px; height: 12px; margin-left: 15px; }
.sep { width: 1px; height: 12px; background: #ddd; }
.rd + .sep { margin-left: 12px; }
.rev { width: 62px; height: 16px; margin: -3px 13px 0; font-size: 10px; line-height: 12px; color: #222; display: flex; gap: 2px; white-space: nowrap; border-bottom: 2px solid; border-image: linear-gradient(90deg, #60c086 90%, #f06060 90%) 1; }
.bar .rev svg { width: 10px; height: 9px; fill: #000; stroke: none; margin-top: 1px; }
.bm { width: 10px; height: 12px; margin: 0 20px 0 10px; }
.key { width: 16px; height: 16px; margin-left: 15px; }
.dl { position: relative; margin-left: 22px; }
.dl svg { width: 14px; height: 14px; }
.dl b { position: absolute; left: 6px; top: 6px; width: 10px; height: 10px; border-radius: 50%; background: #0d79d8; color: #fff; font-size: 8px; line-height: 10px; text-align: center; }
.view { position: relative; display: flex; height: 529px; background: #fff; }
.page { width: 1057px; height: 529px; padding-left: 12px; overflow: hidden; color: #444; font-size: 8px; }
.page > * { width: 1032px; }
.okbar { height: 7px; background: #dfefd8; border-radius: 0 0 3px 3px; }
.info { margin-top: 17px; font-size: 8.400px; letter-spacing: -.170px; line-height: 12px; height: 12px; color: #333; }
a { color: #3f7cb8; }
.u { text-decoration: underline; }
.legend { margin-top: 11.500px; height: 10.500px; line-height: 10px; font-size: 8px; letter-spacing: -.250px; }
.page > .lg { width: 122px; height: 17.500px; padding-left: 3px; line-height: 18px; color: #fff; font-weight: 600; font-size: 7.400px; }
.green { background: #008000; }
.red { background: #fe0000; }
.panel { height: 29.500px; border: 1px solid #dfdfdf; border-radius: 3px; background: #f4f4f4; padding-left: 12px; line-height: 28px; color: #4a84c0; font-size: 7.900px; letter-spacing: -.130px; }
.p2 { margin-top: 4px; }
h2 { margin-top: 5px; height: 26px; font: 400 15.500px/21px "Liberation Sans", sans-serif; letter-spacing: -.4px; color: #444; }
table { table-layout: fixed; border-spacing: 0; border-right: 1px solid #ddd; }
.c1 { width: 21px; } .c2 { width: 205px; } .c3 { width: 61px; } .c4 { width: 17px; } .c5 { width: 94px; } .c6 { width: 40px; }
.c7 { width: 49px; } .c8 { width: 90px; } .c9 { width: 62px; } .c10 { width: 50px; } .c11 { width: 90px; } .c12 { width: 253px; }
th, td { border: 1px solid #ddd; border-width: 1px 0 0 1px; padding: 0 0 1px 4px; text-align: left; white-space: nowrap; font-size: 8px; line-height: 11px; }
th { padding: 8px 0 0 6px; vertical-align: top; font-size: 7.700px; line-height: 11px; font-weight: 700; color: #444; background: #f9f9f9; }
th:first-child { padding-left: 7px; }
.head { height: 37px; }
th .cb { width: 11px; height: 11px; margin: -3px 0 -4px; vertical-align: middle; }
tr { height: 26px; }
.short { height: 25px; }
tr:nth-child(odd) td { background: #f9f9f9; }
tr.hover td { background: #f5f5f5; }
td.n { font-size: 8px; letter-spacing: -.1px; line-height: 12px; color: #777; padding-bottom: 0; }
td.n a { font-size: 10px; letter-spacing: -.470px; line-height: 10px; color: #336ca5; }
td.tail { padding-left: 60px; }
.k { text-align: center; padding-left: 12px; }
.cb { display: inline-block; width: 13px; height: 13px; border: 1px solid #ccc; border-radius: 2px; background: #fff; vertical-align: middle; }
.cb.on { background: #fbebc5; border-color: #d7c9a3; }
.cb.on::after { content: ""; display: block; width: 8px; height: 4px; border: solid #111; border-width: 0 0 2px 2px; transform: translate(2px, 2px) rotate(-48deg); }
.r i { display: block; width: 9px; height: 13px; background: #fe0000; }
.f { display: flex; align-items: center; justify-content: space-between; height: 15px; border: 1px solid #ccc; border-radius: 3px; background: #fff; padding: 0 3px; font-size: 7.800px; letter-spacing: -.1px; color: #555; overflow: hidden; }
.f svg { width: 8px; height: 6px; margin-left: auto; }
.s { width: 41px; } .m { width: 82px; } .l { width: 244px; }
.scroll { width: 13px; background: #f2f2f2; display: flex; flex-direction: column; align-items: center; padding: 5px 0 4px; }
.scroll svg { width: 8px; height: 6px; }
.scroll span { width: 11px; height: 174px; background: #c1c1c1; margin: 55px 0 auto; }
.status { position: absolute; left: 0; bottom: 0; width: 93px; height: 18px; background: #f3f3f3; color: #666; font-size: 9.400px; line-height: 18px; padding-left: 6px; white-space: nowrap; }
.mark { position: absolute; left: 5px; top: 480px; width: 1043px; height: 34px; border: 4px solid #fb0000; border-radius: 1px; }
.cursor { position: absolute; left: 87px; top: 446px; width: 10px; height: 16px; }

/* taskbar */
.task { height: 32px; background: linear-gradient(90deg, #dcdcdc, #e6e6e6 50%, #dcdcdc); display: flex; align-items: center; }
.sys { display: flex; width: 157.500px; }
.sys svg { width: 24px; height: 24px; margin: 0 7.500px; }
.sys svg:first-child { margin-left: 7px; }
.apps { display: flex; width: 473px; height: 32px; }
.apps span { width: 36.400px; height: 32px; display: flex; align-items: center; justify-content: center; position: relative; }
.apps svg { width: 22px; height: 22px; }
.apps .run::after { content: ""; position: absolute; left: 4px; right: 4px; bottom: 0; height: 2px; background: #0f67b5; }
.apps .hot { background: #f4f4f4; }
.apps .hot::after { left: 1px; right: 1px; }
.tray { display: flex; width: 352px; justify-content: space-around; margin-left: 1px; }
.tray svg { width: 15px; height: 15px; }
.lang { width: 28px; font-size: 9.800px; text-align: center; color: #222; letter-spacing: -.2px; }
.clock { width: 56px; font-size: 9px; line-height: 14px; text-align: center; color: #222; letter-spacing: -.2px; }
.note { width: 16px; height: 16px; margin-left: 6px; }

/* chat */
.chat { width: 57px; border-left: 1px solid #fff; background: #fff; overflow: hidden; display: flex; flex-direction: column; flex: none; }
.chat header { height: 24px; border-bottom: 1px solid #dcdcdc; display: flex; padding-left: 9px; flex: none; font-size: 12px; }
.chat header svg { width: 15px; height: 15px; margin-top: -3px; }
.chat header b { margin: -5px 0 0 12px; line-height: 18px; letter-spacing: -.3px; }
.notice { width: 40px; height: 29px; margin: 18px 0 9px 53px; background: #fdebdd; border-radius: 4px; flex: none; }
.msgs { display: flex; flex-direction: column; gap: 5.600px; margin-left: 12px; height: 604px; flex: none; }
.msg { width: 90px; height: 74.300px; background: #f1f2f6; border-radius: 8px; padding: 8px 0 0 7px; flex: none; white-space: nowrap; }
.msg.two { height: 95px; }
.msg b { display: block; color: #0e61bd; font-size: 12.300px; line-height: 15px; letter-spacing: -.150px; }
.msg small { display: block; font-size: 12px; line-height: 15px; color: #111; letter-spacing: -.350px; }
.msg p { font-size: 14px; line-height: 21px; margin-top: 5px; color: #222; }
.enter { border-top: 1px solid #ddd; height: 176px; padding: 4px 0 0 8px; font-size: 12px; letter-spacing: -.1px; font-style: italic; color: #666; white-space: nowrap; flex: none; }
.send { border-top: 1px solid #ddd; font-size: 11px; line-height: 12px; padding: 4px 0 0 7px; color: #777; white-space: nowrap; flex: none; }
```
